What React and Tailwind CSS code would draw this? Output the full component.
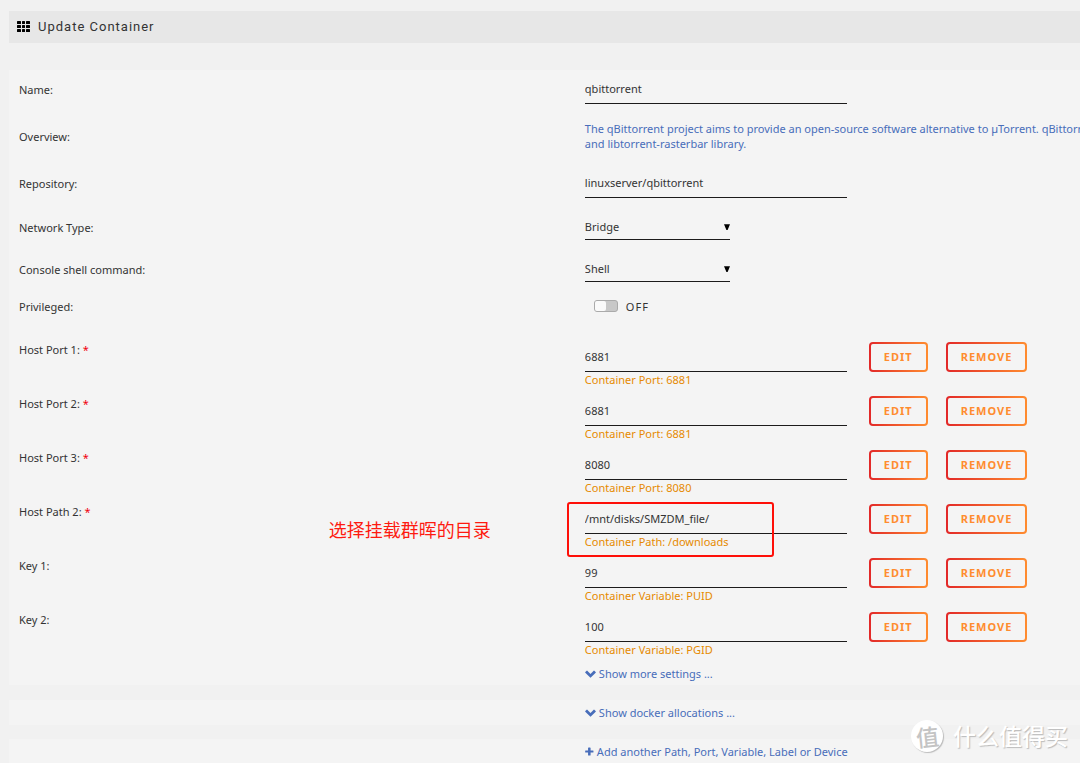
import { useState } from "react";

const configs = [
  { id: "port1", label: "Host Port 1:", required: true, value: "6881", hint: "Container Port: 6881" },
  { id: "port2", label: "Host Port 2:", required: true, value: "6881", hint: "Container Port: 6881" },
  { id: "port3", label: "Host Port 3:", required: true, value: "8080", hint: "Container Port: 8080" },
  {
    id: "path2",
    label: "Host Path 2:",
    required: true,
    value: "/mnt/disks/SMZDM_file/",
    hint: "Container Path: /downloads",
    note: "选择挂载群晖的目录",
  },
  { id: "key1", label: "Key 1:", value: "99", hint: "Container Variable: PUID" },
  { id: "key2", label: "Key 2:", value: "100", hint: "Container Variable: PGID" },
];

function ChevronIcon() {
  return (
    <svg viewBox="0 0 11 11" className="size-[11px] fill-current">
      <path d="M0.3 4.1L1.7 2.7Q2 2.4 2.3 2.7L5.5 5.9L8.7 2.7Q9 2.4 9.3 2.7L10.7 4.1Q11 4.4 10.7 4.7L5.8 9.5Q5.5 9.8 5.2 9.5L0.3 4.7Q0 4.4 0.3 4.1Z" />
    </svg>
  );
}

function PlusIcon() {
  return (
    <svg viewBox="0 0 10 10" className="size-[9px] fill-current">
      <path d="M3.9 0.6h1.8q0.5 0 0.5 0.5V3.8h2.6q0.6 0 0.6 0.5V5.7q0 0.5-0.6 0.5H6.2v2.6q0 0.6-0.5 0.6H3.9q-0.5 0-0.5-0.6V6.2H0.7Q0.2 6.2 0.2 5.7V4.3q0-0.5 0.5-0.5h2.7V1.1q0-0.5 0.5-0.5z" />
    </svg>
  );
}

function Row({ label, htmlFor, children }) {
  return (
    <div className="grid grid-cols-[minmax(0,8fr)_minmax(0,7fr)] items-center">
      {htmlFor ? <label htmlFor={htmlFor}>{label}</label> : <span>{label}</span>}
      <div>{children}</div>
    </div>
  );
}

function TextInput({ id, value }) {
  return (
    <input
      id={id}
      type="text"
      defaultValue={value}
      className="block h-[30px] w-[262px] shrink-0 border-b border-[#1c1b1b] bg-transparent outline-none"
    />
  );
}

function Select({ id, options }) {
  return (
    <div className="relative w-[145px]">
      <select
        id={id}
        className="block h-[26px] w-full appearance-none border-b border-[#1c1b1b] bg-transparent outline-none"
      >
        {options.map((option) => (
          <option key={option}>{option}</option>
        ))}
      </select>
      <svg
        viewBox="0 0 6 6"
        className="pointer-events-none absolute top-[10px] right-0 size-[6px] fill-black"
      >
        <path d="M0 0.3h6L3.6 6H2.4z" />
      </svg>
    </div>
  );
}

function OutlineButton({ children }) {
  return (
    <button
      type="button"
      className="h-[30px] shrink-0 rounded-[4px] border-2 border-transparent px-[13px] pb-[2px] text-[11px] font-bold tracking-[1px] text-[#ff8c2f] [background:linear-gradient(#f4f4f4,#f4f4f4)_padding-box,linear-gradient(90deg,#e22828,#ff8c2f)_border-box]"
    >
      {children}
    </button>
  );
}

function ConfigRow({ config }) {
  return (
    <div className="grid grid-cols-[minmax(0,8fr)_minmax(0,7fr)] items-start">
      <label htmlFor={config.id}>
        {config.label} {config.required && <span className="text-[#f0000c]">*</span>}
      </label>
      <div className="relative">
        <div className="flex">
          <TextInput id={config.id} value={config.value} />
          <div className="ml-[22px] flex gap-[18px]">
            <OutlineButton>EDIT</OutlineButton>
            <OutlineButton>REMOVE</OutlineButton>
          </div>
        </div>
        <div className="text-[#e68a00]">{config.hint}</div>
        {config.note && (
          <>
            <div className="pointer-events-none absolute -top-[2px] -left-[18px] h-[55px] w-[207px] rounded-[3px] border-2 border-[#fe0f08]" />
            <div className="absolute top-3 right-full mr-[94px] font-['Noto_Sans_CJK_SC',sans-serif] text-[18px] leading-[26px] whitespace-nowrap text-[#fe1a10]">
              {config.note}
            </div>
          </>
        )}
      </div>
    </div>
  );
}

function LinkRow({ icon, children }) {
  return (
    <div className="grid grid-cols-[minmax(0,8fr)_minmax(0,7fr)]">
      <a href="#" className="col-start-2 flex items-center gap-[3px] text-[#486dba]">
        {icon}
        {children}
      </a>
    </div>
  );
}

function Watermark() {
  return (
    <div className="pointer-events-none absolute right-3 bottom-3 flex items-center gap-[10px] font-['Noto_Sans_CJK_SC',sans-serif] text-white">
      <div className="flex size-8 items-center justify-center rounded-full bg-white text-[23px] leading-none font-medium text-[#c4c4c4] shadow-[1px_1px_1px_#bbb]">
        <span className="-rotate-6">值</span>
      </div>
      <div className="pb-[2px] text-[23px] leading-[30px] font-medium [text-shadow:1px_1px_1px_#bbb]">什么值得买</div>
    </div>
  );
}

export default function App() {
  const [privileged, setPrivileged] = useState(false);

  return (
    <div className="relative min-h-screen overflow-hidden bg-[#f1f1f1] pt-[11px] pl-[9px] font-['Noto_Sans',sans-serif] text-[11px] leading-[15px] text-[#333]">
      {/* Title bar */}
      <header className="flex h-8 items-center gap-2 bg-[#e7e7e7] px-2 pb-[2px]">
        <svg viewBox="0 0 13 11" className="h-[11px] w-[13px] fill-black">
          {[0, 4, 8].map((y) =>
            [0, 5, 9].map((x) => <rect key={`${x}-${y}`} x={x} y={y} width={x === 5 ? 3 : 4} height="3" rx="0.5" />)
          )}
        </svg>
        <h1 className="font-[Roboto,sans-serif] text-[13px] tracking-[1px]">Update Container</h1>
      </header>

      {/* Template settings */}
      <form className="mt-[27px] flex flex-col gap-4 bg-[#f4f4f4] pt-1 pb-1 pl-[10px]">
        <Row label="Name:" htmlFor="name">
          <TextInput id="name" value="qbittorrent" />
        </Row>
        <Row label="Overview:">
          <p className="py-px whitespace-nowrap text-[#486dba]">
            The qBittorrent project aims to provide an open-source software alternative to µTorrent. qBittorrent is
            <br />
            and libtorrent-rasterbar library.
          </p>
        </Row>
        <Row label="Repository:" htmlFor="repository">
          <TextInput id="repository" value="linuxserver/qbittorrent" />
        </Row>
        <Row label="Network Type:" htmlFor="network">
          <Select id="network" options={["Bridge", "Host", "None"]} />
        </Row>
        <Row label="Console shell command:" htmlFor="shell">
          <Select id="shell" options={["Shell", "Bash"]} />
        </Row>
        <Row label="Privileged:" htmlFor="privileged">
          <div className="flex h-4 items-center gap-2 pl-[9px]">
            <input
              id="privileged"
              type="checkbox"
              checked={privileged}
              onChange={(e) => setPrivileged(e.target.checked)}
              className="h-3 w-6 appearance-none rounded-[3px] border border-[#aaa] bg-[#c8c8c8] before:block before:h-[10px] before:w-[11px] before:rounded-[2px] before:bg-[#fafafa] checked:bg-[#ff8c2f] checked:before:ml-auto"
            />
            <span className="tracking-[1px]">{privileged ? "ON" : "OFF"}</span>
          </div>
        </Row>

        {/* Ports, paths and variables */}
        <div className="flex flex-col gap-[9px] pt-3">
          {configs.map((config) => (
            <ConfigRow key={config.id} config={config} />
          ))}
          <LinkRow icon={<ChevronIcon />}>Show more settings ...</LinkRow>
        </div>
      </form>

      <section className="mt-[15px] bg-[#f4f4f4] py-[5px] pl-[10px]">
        <LinkRow icon={<ChevronIcon />}>Show docker allocations ...</LinkRow>
      </section>

      <section className="mt-[14px] bg-[#f4f4f4] py-[5px] pl-[10px]">
        <LinkRow icon={<PlusIcon />}>Add another Path, Port, Variable, Label or Device</LinkRow>
      </section>

      <Watermark />
    </div>
  );
}
